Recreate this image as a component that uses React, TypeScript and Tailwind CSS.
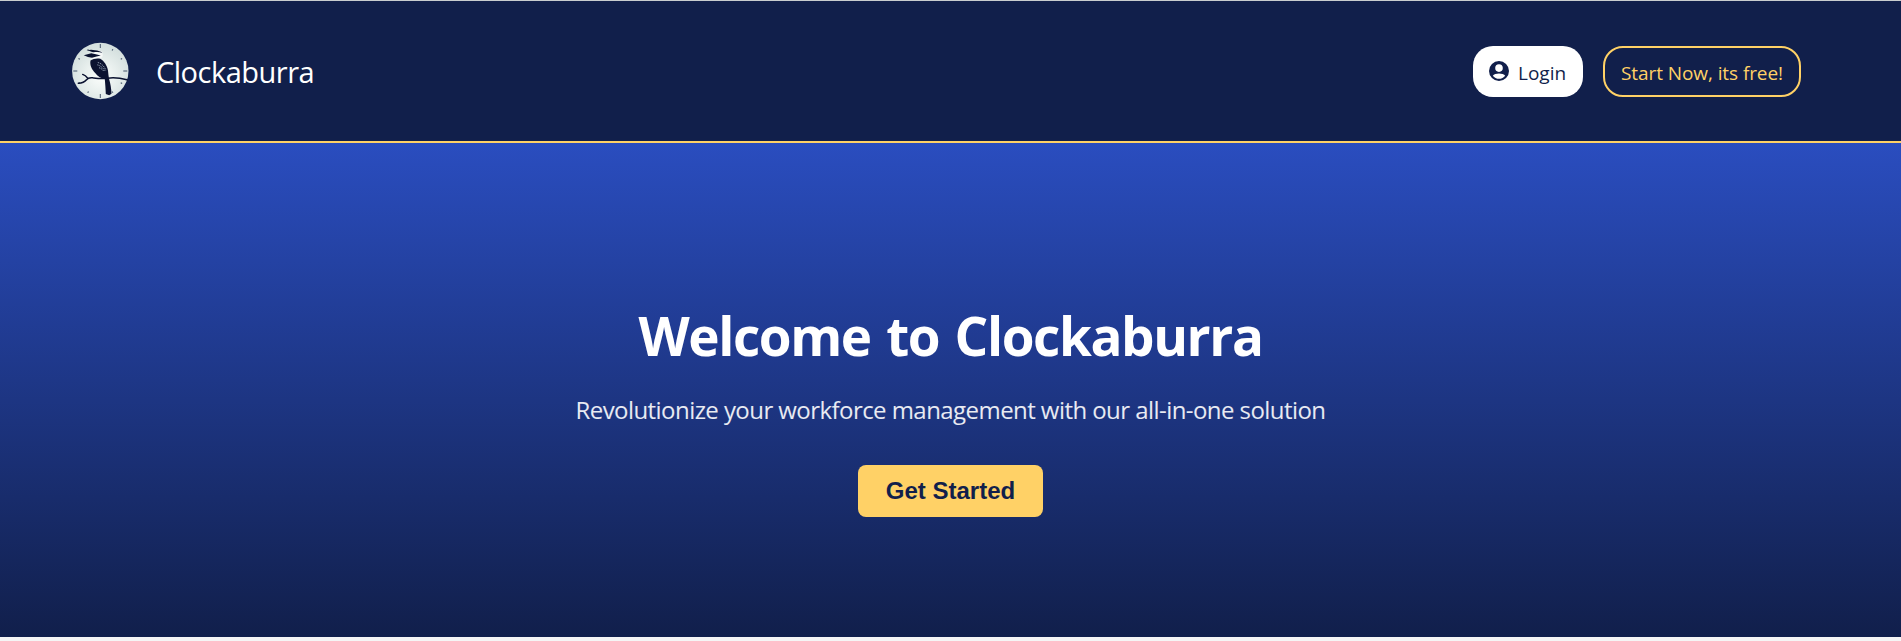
import React from "react";

function Logo() {
  const ticks = Array.from({ length: 12 }, (_, i) => i * 30);
  return (
    <svg viewBox="0 0 80 80" className="mb-[2px] size-20 shrink-0" aria-hidden="true">
      <defs>
        <radialGradient id="face" cx="0.5" cy="0.6" r="0.55">
          <stop offset="0" stopColor="#fbfdfb" />
          <stop offset="0.5" stopColor="#e9f0ee" />
          <stop offset="1" stopColor="#d5e0df" />
        </radialGradient>
      </defs>
      <circle cx="40.3" cy="41" r="28.2" fill="url(#face)" />
      {ticks.map((a) => (
        <path
          key={a}
          d={a % 90 === 0 ? "M40.3 14v4" : "M40.3 15.800v1.600"}
          stroke="#46566b"
          strokeWidth={a % 90 === 0 ? 1 : 1.1}
          transform={`rotate(${a} 40.3 41)`}
        />
      ))}
      <path
        d="M18.300 53.300c3.700-.2 6.200-1 8.200-3.500 1-1.500 3-2.300 6-2 5 .6 9 1.200 15 .4 6-.9 12-.4 19.500 1.600M27.500 48c-1.200-1.600-2.600-2.800-4.800-3.600"
        fill="none"
        stroke="#0b1230"
        strokeWidth="1.500"
        strokeLinecap="round"
      />
      <path d="M31 28l1.500-5.500 5-2.300 4.700 1.500.6 4.300-3 3.500-7 .5z" fill="#f6f9f8" />
      <path d="M26.500 20.300c3-.8 6-.8 8.500-.1 3.200.3 6.200 1.300 7.800 2.600-3.200-.9-6.300-.8-9.300-.5-1.800-.2-3-1.200-7-2z" fill="#0b1230" />
      <path d="M23.700 25.300l7.600-2.100 4.500 1 5 1.300-4.300 1-4.500 1.300-4-.7z" fill="#0b1230" />
      <path
        d="M30.500 30.500c2.500-1.700 6.500-2.700 9.800-1.700 3.900 2.300 6.800 6.700 7.700 11.700.3 2.900.5 5.500 1 8.200 1.500 4.700 2.400 10.600 2.500 15l-2.300 1.600-3.400-1.400c-.2-5.400-.6-9.800-1-14.900-4-.7-7.200-2.400-9.600-6-3.200-3.200-5.700-7.700-4.700-12.500z"
        fill="#0b1230"
      />
      <path
        d="M37.800 32.500c3.500.8 6.500 3.800 8 7.700M37.300 34.800c3 .8 6 3.200 7.700 6M39 37.700c2 .6 3.500 1.700 4.600 3.300"
        fill="none"
        stroke="#9aa8ba"
        strokeWidth="0.900"
        strokeDasharray="1.400 0.800"
      />
    </svg>
  );
}

function UserIcon() {
  return (
    <svg viewBox="0 0 20 20" className="mb-[1px] size-5 shrink-0" aria-hidden="true">
      <path
        fill="currentColor"
        fillRule="evenodd"
        d="M10 0a10 10 0 1 0 0 20 10 10 0 0 0 0-20zm0 3.300a3.800 3.800 0 1 1 0 7.600 3.800 3.800 0 0 1 0-7.600zm0 14.500c-2.500 0-4.700-1.200-6.200-3.100.9-1.400 3.800-2.300 6.200-2.300s5.300.9 6.200 2.300A7.800 7.800 0 0 1 10 17.800z"
      />
    </svg>
  );
}

export default function App() {
  return (
    <div className="flex h-[641px] flex-col bg-[#f5f5f5] font-['Open_Sans','Noto_Sans',sans-serif]">
      <header className="flex h-[143px] shrink-0 items-center justify-between border-t border-b-2 border-t-[#c9cdcf] border-b-[#ffd166] bg-[#111f4b] pr-[100px] pl-[60px]">
        <div className="flex items-center gap-4">
          <Logo />
          <span className="pt-[1px] text-[29px] leading-10 tracking-[-0.5px] whitespace-nowrap text-white">
            Clockaburra
          </span>
        </div>
        <nav className="flex gap-5 text-[19px] whitespace-nowrap">
          <button className="flex h-[51px] w-[110px] items-center gap-[9px] rounded-[20px] bg-white pl-4 text-[#111f4b]">
            <UserIcon />
            <span className="pt-[4px]">Login</span>
          </button>
          <button className="flex h-[51px] w-[198px] items-center justify-center rounded-[20px] border-2 border-[#ffd166] text-[#ffd166]">
            <span className="pt-[4px] tracking-[-0.08px]">Start Now, its free!</span>
          </button>
        </nav>
      </header>
      <main className="flex h-[494px] shrink-0 flex-col items-center bg-linear-to-b/srgb from-[#2a4dbf] to-[#111f4b] pt-[155px]">
        <h1 className="text-[53px] leading-[75px] font-bold tracking-[-1.4px] [word-spacing:3px] whitespace-nowrap text-white">
          Welcome to Clockaburra
        </h1>
        <p className="mt-[21px] text-[24px] leading-8 tracking-[-0.56px] whitespace-nowrap text-white/90">
          Revolutionize your workforce management with our all-in-one solution
        </p>
        <button className="mt-[39px] h-[52px] w-[185px] rounded-lg bg-[#ffd166] font-['Liberation_Sans',sans-serif] text-[24px] font-bold text-[#111f4b]">
          Get Started
        </button>
      </main>
    </div>
  );
}
